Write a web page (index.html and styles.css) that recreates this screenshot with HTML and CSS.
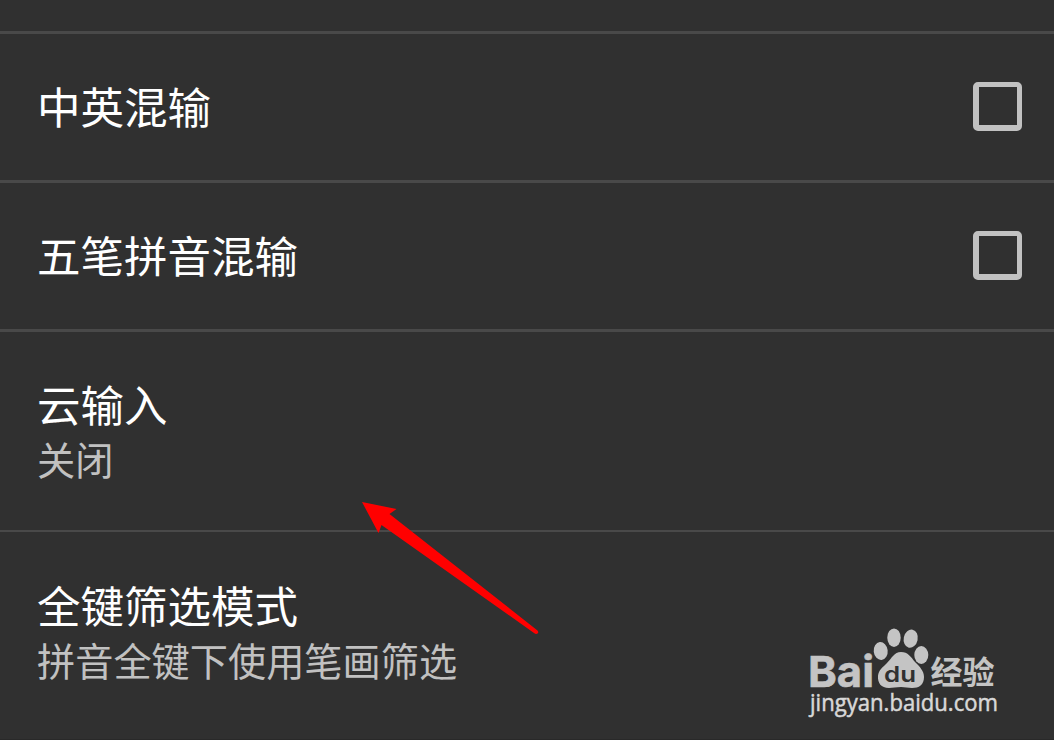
FILE: index.html
```html
<!DOCTYPE html>
<html lang="zh-CN">
<head>
  <meta charset="UTF-8">
  <meta name="viewport" content="width=device-width, initial-scale=1.0">
  <title>输入设置</title>
  <link rel="stylesheet" href="styles.css">
</head>
<body>
  <div class="settings">
    <div class="setting-spacer"></div>
    <div class="setting-row">
      <div class="setting-title">中英混输</div>
      <div class="checkbox"></div>
    </div>
    <div class="setting-row">
      <div class="setting-title">五笔拼音混输</div>
      <div class="checkbox"></div>
    </div>
    <div class="setting-row two-line">
      <div class="setting-text">
        <div class="setting-title">云输入</div>
        <div class="setting-summary">关闭</div>
      </div>
    </div>
    <div class="setting-row two-line last">
      <div class="setting-text">
        <div class="setting-title">全键筛选模式</div>
        <div class="setting-summary">拼音全键下使用笔画筛选</div>
      </div>
    </div>
  </div>

  <svg class="arrow" width="180" height="136" viewBox="360 500 180 136">
    <path d="M362 502L396.500 509L389.500 514L537.500 630.500Q539 632.500 537.500 633.500Q536 634.500 534 633L381.500 525L378.500 533Z"/>
  </svg>

  <svg class="watermark" width="200" height="110" viewBox="802 622 200 110">
    <text class="logo-latin" x="808" y="686.500" textLength="66" lengthAdjust="spacingAndGlyphs">Bai</text>
    <g class="paw">
      <ellipse cx="880.700" cy="651" rx="7" ry="9" transform="rotate(-6 880.700 651)"/>
      <ellipse cx="894" cy="637.700" rx="6.700" ry="9.300"/>
      <ellipse cx="910.700" cy="638.700" rx="7" ry="9.200" transform="rotate(12 910.700 638.700)"/>
      <ellipse cx="921.300" cy="655" rx="7" ry="9"/>
      <path d="M901 652C908 652 911 657 915 662C920 667 924 671 924 677C924 685 919 688 912 688C908 688 905 687 901 687C896 687 893 688 889 688C881 688 877.500 683 878 676C878.500 670 883 667 887 663C892 658 894 652 901 652Z"/>
    </g>
    <text class="logo-du" x="884" y="682" textLength="32" lengthAdjust="spacingAndGlyphs">du</text>
    <text class="logo-cjk" x="930.500" y="684" textLength="64" lengthAdjust="spacingAndGlyphs">经验</text>
    <text class="logo-url" x="810" y="711" textLength="188" lengthAdjust="spacingAndGlyphs">jingyan.baidu.com</text>
  </svg>
</body>
</html>
```

FILE: styles.css
```css
:root {
  --background-color: #303030;
  --divider-color: #494949;
  --text-color: #ffffff;
  --summary-color: #c1c1c1;
}

body {
  margin: 0;
  height: 740px;
  overflow: hidden;
  position: relative;
  background-color: var(--background-color);
  color: var(--text-color);
  font-family: 'Noto Sans CJK SC', sans-serif;
}

.settings {
  display: flex;
  flex-direction: column;
}

.setting-spacer {
  height: 31px;
  border-bottom: 3px solid var(--divider-color);
}

.setting-row {
  display: flex;
  align-items: center;
  justify-content: space-between;
  box-sizing: border-box;
  height: 149px;
  padding: 0 32px 2px 37px;
  border-bottom: 3px solid var(--divider-color);
}

.setting-row.two-line {
  height: 200px;
  padding-bottom: 4px;
  border-bottom-width: 2px;
}

.setting-row.last {
  height: 208px;
  padding-bottom: 11px;
  border-bottom: 1px solid #292929;
}

.setting-title {
  font-size: 43.5px;
  line-height: 58px;
}

.setting-summary {
  font-size: 38.2px;
  line-height: 51px;
  color: var(--summary-color);
}

.checkbox {
  box-sizing: border-box;
  width: 49px;
  height: 49px;
  border: 5px solid #c1c1c1;
  border-left-width: 6px;
  border-bottom-width: 6px;
  border-radius: 5px;
}

.arrow {
  position: absolute;
  left: 360px;
  top: 500px;
  fill: #ff0000;
}

.watermark {
  position: absolute;
  left: 802px;
  top: 622px;
  fill: #c4c4c4;
}

.logo-latin {
  font: bold 43px Inter, sans-serif;
  stroke: #c4c4c4;
  stroke-width: 0.6px;
}

.logo-du {
  font: 600 22px Inter, sans-serif;
  fill: var(--background-color);
}

.logo-cjk {
  font: bold 32px 'Noto Sans CJK SC', sans-serif;
}

.logo-url {
  font: 500 23px 'Open Sans', sans-serif;
  fill: #d8d8d8;
  stroke: #d8d8d8;
  stroke-width: 0.5px;
}
```
